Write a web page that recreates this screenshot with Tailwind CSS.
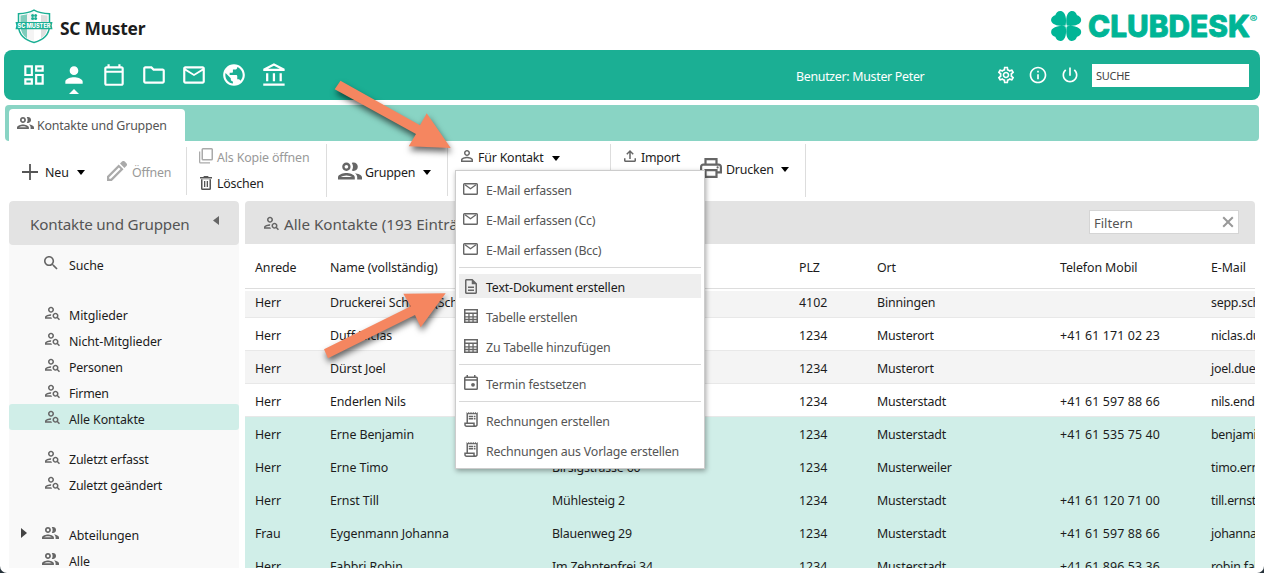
<!DOCTYPE html>
<html lang="de">
<head>
<meta charset="utf-8">
<title>ClubDesk – Kontakte und Gruppen</title>
<script src="https://cdn.jsdelivr.net/npm/@tailwindcss/browser@4"></script>
</head>
<body class="bg-[#26323a]">
<svg class="hidden">
  <symbol id="dash" viewBox="0 0 24 24"><path d="M19 5v2h-4V5h4M9 5v6H5V5h4m10 8v6h-4v-6h4M9 17v2H5v-2h4M21 3h-8v6h8V3zM11 3H3v10h8V3zm10 8h-8v10h8V11zm-10 4H3v6h8v-6z"/></symbol>
  <symbol id="person" viewBox="0 0 24 24"><path d="M12 12c2.21 0 4-1.79 4-4s-1.79-4-4-4-4 1.79-4 4 1.79 4 4 4zm0 2c-2.67 0-8 1.34-8 4v2h16v-2c0-2.66-5.33-4-8-4z"/></symbol>
  <symbol id="cal" viewBox="0 0 24 24"><path d="M19 4h-1V2h-2v2H8V2H6v2H5c-1.1 0-2 .9-2 2v14c0 1.1.9 2 2 2h14c1.1 0 2-.9 2-2V6c0-1.1-.9-2-2-2zm0 16H5V10h14v10zm0-12H5V6h14v2z"/></symbol>
  <symbol id="folder" viewBox="0 0 24 24"><path d="M9.17 6l2 2H20v10H4V6h5.17M10 4H4c-1.1 0-1.99.9-1.99 2L2 18c0 1.1.9 2 2 2h16c1.1 0 2-.9 2-2V8c0-1.1-.9-2-2-2h-8l-2-2z"/></symbol>
  <symbol id="mail" viewBox="0 0 24 24"><path d="M22 6c0-1.1-.9-2-2-2H4c-1.1 0-2 .9-2 2v12c0 1.1.9 2 2 2h16c1.1 0 2-.9 2-2V6zm-2 0l-8 5-8-5h16zm0 12H4V8l8 5 8-5v10z"/></symbol>
  <symbol id="globe" viewBox="0 0 24 24"><path d="M12 2C6.48 2 2 6.48 2 12s4.48 10 10 10 10-4.48 10-10S17.52 2 12 2zm-1 17.93c-3.95-.49-7-3.85-7-7.93 0-.62.08-1.21.21-1.79L9 15v1c0 1.1.9 2 2 2v1.93zm6.9-2.54c-.26-.81-1-1.39-1.9-1.39h-1v-3c0-.55-.45-1-1-1H8v-2h2c.55 0 1-.45 1-1V7h2c1.1 0 2-.9 2-2v-.41c2.93 1.19 5 4.06 5 7.41 0 2.08-.8 3.97-2.1 5.39z"/></symbol>
  <symbol id="bank" viewBox="0 0 24 24"><path d="M6.5 10h-2v7h2v-7zm6 0h-2v7h2v-7zm8.5 9H2v2h19v-2zm-2.5-9h-2v7h2v-7zm-7-6.74L16.71 6H6.29l5.21-2.74m0-2.26L2 6v2h19V6l-9.5-5z"/></symbol>
  <symbol id="gear" viewBox="0 0 24 24"><path d="M19.43 12.98c.04-.32.07-.64.07-.98 0-.34-.03-.66-.07-.98l2.11-1.65c.19-.15.24-.42.12-.64l-2-3.46c-.09-.16-.26-.25-.44-.25-.06 0-.12.01-.17.03l-2.49 1c-.52-.4-1.08-.73-1.69-.98l-.38-2.65C14.46 2.18 14.25 2 14 2h-4c-.25 0-.46.18-.49.42l-.38 2.65c-.61.25-1.17.59-1.69.98l-2.49-1c-.06-.02-.12-.03-.18-.03-.17 0-.34.09-.43.25l-2 3.46c-.13.22-.07.49.12.64l2.11 1.65c-.04.32-.07.65-.07.98 0 .33.03.66.07.98l-2.11 1.65c-.19.15-.24.42-.12.64l2 3.46c.09.16.26.25.44.25.06 0 .12-.01.17-.03l2.49-1c.52.4 1.08.73 1.69.98l.38 2.65c.03.24.24.42.49.42h4c.25 0 .46-.18.49-.42l.38-2.65c.61-.25 1.17-.59 1.69-.98l2.49 1c.06.02.12.03.18.03.17 0 .34-.09.43-.25l2-3.46c.12-.22.07-.49-.12-.64l-2.11-1.65zm-1.98-1.71c.04.31.05.52.05.73 0 .21-.02.43-.05.73l-.14 1.13.89.7 1.08.84-.7 1.21-1.27-.51-1.04-.42-.9.68c-.43.32-.84.56-1.25.73l-1.06.43-.16 1.13-.2 1.35h-1.4l-.19-1.35-.16-1.13-1.06-.43c-.43-.18-.83-.41-1.23-.71l-.91-.7-1.06.43-1.27.51-.7-1.21 1.08-.84.89-.7-.14-1.13c-.03-.31-.05-.54-.05-.74s.02-.43.05-.73l.14-1.13-.89-.7-1.08-.84.7-1.21 1.27.51 1.04.42.9-.68c.43-.32.84-.56 1.25-.73l1.06-.43.16-1.13.2-1.35h1.39l.19 1.35.16 1.13 1.06.43c.43.18.83.41 1.23.71l.91.7 1.06-.43 1.27-.51.7 1.21-1.07.85-.89.7.14 1.13zM12 8c-2.21 0-4 1.79-4 4s1.79 4 4 4 4-1.79 4-4-1.79-4-4-4zm0 6c-1.1 0-2-.9-2-2s.9-2 2-2 2 .9 2 2-.9 2-2 2z"/></symbol>
  <symbol id="info" viewBox="0 0 24 24"><path d="M11 7h2v2h-2zm0 4h2v6h-2zm1-9C6.48 2 2 6.48 2 12s4.48 10 10 10 10-4.48 10-10S17.52 2 12 2zm0 18c-4.41 0-8-3.59-8-8s3.59-8 8-8 8 3.59 8 8-3.59 8-8 8z"/></symbol>
  <symbol id="power" viewBox="0 0 24 24"><path d="M13 3h-2v10h2V3zm4.83 2.17l-1.42 1.42C17.99 7.86 19 9.81 19 12c0 3.87-3.13 7-7 7s-7-3.13-7-7c0-2.19 1.01-4.14 2.58-5.42L6.17 5.17C4.23 6.82 3 9.26 3 12c0 4.97 4.03 9 9 9s9-4.03 9-9c0-2.74-1.23-5.18-3.17-6.83z"/></symbol>
  <symbol id="group" viewBox="2 5 20 14"><path d="M9 13.75c-2.34 0-7 1.17-7 3.5V19h14v-1.75c0-2.33-4.66-3.5-7-3.5zM4.34 17c.84-.58 2.87-1.25 4.66-1.25s3.82.67 4.66 1.25H4.34zM9 12c1.93 0 3.5-1.57 3.5-3.5S10.93 5 9 5 5.500 6.570 5.500 8.500 7.070 12 9 12zm0-5c.83 0 1.500.67 1.500 1.500S9.830 10 9 10s-1.500-.67-1.500-1.500S8.170 7 9 7zm7.040 6.810c1.160.84 1.960 1.960 1.960 3.440V19h4v-1.750c0-2.020-3.500-3.170-5.960-3.440zM15 12c1.930 0 3.500-1.570 3.500-3.500S16.930 5 15 5c-.54 0-1.040.13-1.500.35.63.89 1 1.980 1 3.150s-.37 2.260-1 3.150c.46.22.96.35 1.500.35z"/></symbol>
  <symbol id="psearch" viewBox="2 3 20 20"><path d="M10 12c2.21 0 4-1.79 4-4s-1.79-4-4-4-4 1.79-4 4 1.79 4 4 4zm0-6c1.1 0 2 .9 2 2s-.9 2-2 2-2-.9-2-2 .9-2 2-2zM4 18c.22-.72 3.31-2 6-2 0-.7.13-1.37.35-1.99C7.62 13.91 2 15.27 2 18v2h9.54c-.52-.58-.93-1.25-1.19-2H4zM19.43 18.02C19.79 17.43 20 16.74 20 16c0-2.21-1.79-4-4-4s-4 1.79-4 4 1.79 4 4 4c.74 0 1.430-.22 2.020-.57L20.590 22 22 20.590l-2.570-2.570zM16 18c-1.1 0-2-.9-2-2s.9-2 2-2 2 .9 2 2-.9 2-2 2z"/></symbol>
  <symbol id="search" viewBox="3 3 18 18"><path d="M15.5 14h-.79l-.28-.27C15.410 12.590 16 11.110 16 9.500 16 5.910 13.090 3 9.500 3S3 5.910 3 9.500 5.910 16 9.500 16c1.610 0 3.090-.59 4.230-1.570l.27.28v.79l5 4.990L20.490 19l-4.990-5zm-6 0C7.010 14 5 11.990 5 9.500S7.010 5 9.500 5 14 7.010 14 9.500 11.990 14 9.500 14z"/></symbol>
  <symbol id="plus" viewBox="0 0 16 16"><path d="M7.100 0h1.800v7.100H16v1.800H8.900V16H7.100V8.900H0V7.100h7.100z"/></symbol>
  <symbol id="pen" viewBox="0 0 20 20"><path fill-rule="evenodd" d="M0 20v-4.800L11.700 3.500l4.800 4.800L4.800 20zM2.200 17.800h1.600l9.700-9.700-1.600-1.600L2.200 16.200zM13 2.600l2-2a2 2 0 0 1 2.800 0l1.600 1.600a2 2 0 0 1 0 2.800l-2 2z"/></symbol>
  <symbol id="copy" viewBox="0 0 14 16"><path fill-rule="evenodd" d="M4 0h8.500A1.500 1.500 0 0 1 14 1.500v9.500a1.500 1.500 0 0 1-1.500 1.500H4A1.500 1.500 0 0 1 2.500 11V1.500A1.500 1.500 0 0 1 4 0zm0 1.500V11h8.500V1.500zM0 3.500h1.300v10.700h9.700v1.300H1.500A1.500 1.500 0 0 1 0 14z"/></symbol>
  <symbol id="trash" viewBox="0 0 12 14"><path fill-rule="evenodd" d="M4 0h4l.7 1H12v1.500H0V1h3.300zM1 3.300h10v9.200a1.500 1.500 0 0 1-1.500 1.500h-7A1.500 1.500 0 0 1 1 12.500zm1.500.2v9h7v-9zM4 5h1.300v6H4zm2.700 0H8v6H6.700z"/></symbol>
  <symbol id="pout" viewBox="4 4 16 16"><path d="M12 5.900c1.160 0 2.100.94 2.100 2.100s-.94 2.100-2.100 2.100S9.900 9.160 9.900 8s.94-2.100 2.100-2.100m0 9c2.970 0 6.100 1.460 6.100 2.100v1.100H5.900V17c0-.64 3.130-2.100 6.100-2.100M12 4C9.790 4 8 5.790 8 8s1.790 4 4 4 4-1.790 4-4-1.790-4-4-4zm0 9c-2.670 0-8 1.340-8 4v3h16v-3c0-2.660-5.330-4-8-4z"/></symbol>
  <symbol id="upload" viewBox="4 4 16 16"><path d="M18 15v3H6v-3H4v3c0 1.100.9 2 2 2h12c1.100 0 2-.9 2-2v-3h-2zM7 9l1.410 1.410L11 7.830V16h2V7.830l2.590 2.580L17 9l-5-5-5 5z"/></symbol>
  <symbol id="print" viewBox="2 3 20 18"><path d="M19 8h-1V3H6v5H5c-1.660 0-3 1.340-3 3v6h4v4h12v-4h4v-6c0-1.660-1.340-3-3-3zM8 5h8v3H8V5zm8 12v2H8v-4h8v2zm2-2v-2H6v2H4v-4c0-.55.45-1 1-1h14c.55 0 1 .45 1 1v4h-2z"/><circle cx="18" cy="11.500" r="1"/></symbol>
  <symbol id="menvelope" viewBox="0 0 15 12"><rect x=".7" y=".7" width="13.600" height="10.600" rx=".8" fill="none" stroke="#666" stroke-width="1.400"/><path d="M2 1.800l5.500 4L13 1.800" fill="none" stroke="#666" stroke-width="1.300"/></symbol>
  <symbol id="doc" viewBox="4 2 16 20"><path d="M8 16h8v2H8zm0-4h8v2H8zm6-10H6c-1.100 0-2 .9-2 2v16c0 1.100.89 2 1.990 2H18c1.100 0 2-.9 2-2V8l-6-6zm4 18H6V4h7v5h5v11z"/></symbol>
  <symbol id="table" viewBox="0 0 14 14"><path fill-rule="evenodd" d="M0 0h14v14H0zM1.500 1.500v2h11v-2zM1.500 5v2.200h2.800V5zm4.100 0v2.200h2.800V5zm4.100 0v2.200h2.800V5zM1.500 8.600v1.200h2.800V8.600zm4.100 0v1.200h2.800V8.600zm4.100 0v1.200h2.800V8.600zM1.500 11.200v1.400h2.800v-1.400zm4.100 0v1.400h2.800v-1.400zm4.100 0v1.400h2.800v-1.400z"/></symbol>
  <symbol id="event" viewBox="0 0 14 15"><path fill-rule="evenodd" d="M2.500 0H4v1.500h6V0h1.500v1.500h1A1.500 1.500 0 0 1 14 3v10.500a1.500 1.500 0 0 1-1.500 1.500h-11A1.500 1.500 0 0 1 0 13.500V3a1.500 1.500 0 0 1 1.500-1.500h1zM1.500 3v1.200h11V3zm0 2.700v7.800h11V5.700z"/><circle cx="9" cy="9.800" r="1.900"/></symbol>
  <symbol id="receipt" viewBox="3 2 18 20"><path d="M19.500 3.500L18 2l-1.500 1.500L15 2l-1.500 1.500L12 2l-1.500 1.500L9 2 7.500 3.500 6 2v14H3v3c0 1.660 1.340 3 3 3h12c1.660 0 3-1.340 3-3V2l-1.500 1.500zM15 20H6c-.55 0-1-.45-1-1v-1h10v2zm4-1c0 .55-.45 1-1 1s-1-.45-1-1v-3H8V5h11v14zM9 7h6v2H9zM16 7h2v2h-2zM9 10h6v2H9zM16 10h2v2h-2z"/></symbol>
</svg>

<div class="relative flex h-[573px] w-[1264px] flex-col overflow-hidden rounded-b-[7px] bg-white font-['Noto_Sans',sans-serif] text-[12.4px] leading-[18px] tracking-[-0.09px] text-[#1c1c1c]">

  <!-- Brand row -->
  <header class="flex h-[50px] shrink-0 justify-between">
    <div class="flex pl-[15px]">
      <svg class="mt-[9px] h-[35px] w-[38px]" viewBox="0 0 38 35">
        <path d="M19 1.200Q25 4.500 34.500 4.800V17Q34 29.500 19 33.500Q4 29.500 3.500 17V4.800Q13 4.500 19 1.200Z" fill="#fff" stroke="#1baf94" stroke-width="1.500"/>
        <path d="M19 3Q13 6.200 5.500 6.500V16.500Q6 26 12 29.300V6z" fill="#7fcdbc"/>
        <path d="M12 5.500L19 3.300V31.800Q15 31 12 29.200z" fill="#f4f4f4"/>
        <path d="M19 3.300Q25 6 32.500 6.500V17Q32 26 26 29.500L19 31.800z" fill="#fff"/>
        <path d="M26 6v23.500Q32 26 32.500 17V6.500z" fill="#dedede"/>
        <g fill="#1baf94"><circle cx="17.600" cy="6.500" r="1.500"/><circle cx="20.600" cy="6.500" r="1.500"/><circle cx="17.600" cy="9.500" r="1.500"/><circle cx="20.600" cy="9.500" r="1.500"/>
        <path d="M0.500 13h37l-.8 3.500.8 3.700H.5l.8-3.700z"/></g>
        <text x="2.500" y="18.900" font-family="Inter, sans-serif" font-weight="800" font-size="6" letter-spacing="0" fill="#fff" textLength="33" lengthAdjust="spacingAndGlyphs">SC MUSTER</text>
      </svg>
      <h1 class="ml-[7px] mt-[15px] text-[17.4px] font-bold leading-[26px] tracking-[-0.25px]">SC Muster</h1>
    </div>
    <svg class="mr-[4px] mt-[9px] h-[36px] w-[210px]" viewBox="0 0 210 36" fill="#00b596">
      <path d="M16.700 16.600C15.300 9.500 17 3.500 20.500 2.200C24 1.200 26.200 3.800 27 6.200C29.500 7 31.800 9 31 12.300C29.700 15.800 23.500 17.700 16.700 16.600Z"/>
      <path d="M16.700 16.600C15.300 9.500 17 3.500 20.500 2.200C24 1.200 26.200 3.800 27 6.200C29.500 7 31.800 9 31 12.300C29.700 15.800 23.500 17.700 16.700 16.600Z" transform="translate(32.300 0) scale(-1 1)"/>
      <path d="M16.700 16.600C15.300 9.500 17 3.500 20.500 2.200C24 1.200 26.200 3.800 27 6.200C29.500 7 31.800 9 31 12.300C29.700 15.800 23.500 17.700 16.700 16.600Z" transform="translate(0 34) scale(1 -1)"/>
      <path d="M16.700 16.600C15.300 9.500 17 3.500 20.500 2.200C24 1.200 26.200 3.800 27 6.200C29.500 7 31.800 9 31 12.300C29.700 15.800 23.500 17.700 16.700 16.600Z" transform="translate(32.300 34) scale(-1 -1)"/>
      <text x="38" y="28.300" font-family="Inter, sans-serif" font-weight="800" font-size="30" letter-spacing="0" stroke="#00b596" stroke-width=".8" stroke-linejoin="round" textLength="162" lengthAdjust="spacingAndGlyphs">CLUBDESK</text>
      <text x="199.500" y="14" font-family="Inter, sans-serif" font-size="10" font-weight="600" letter-spacing="0" textLength="8" lengthAdjust="spacingAndGlyphs">®</text>
    </svg>
  </header>

  <!-- Main navigation -->
  <nav class="mx-[4px] flex h-[50px] shrink-0 items-center rounded-[8px] bg-[#1baf94] pl-[10px] text-white">
    <div class="flex fill-white">
      <div class="flex w-10 justify-center"><svg class="size-[26px]"><use href="#dash"/></svg></div>
      <div class="relative flex w-10 justify-center"><svg class="size-[26px]"><use href="#person"/></svg><svg class="absolute left-[15px] top-[27px] h-[5px] w-[10px]" viewBox="0 0 10 5"><path d="M0 5L5 0L10 5z"/></svg></div>
      <div class="flex w-10 justify-center"><svg class="size-[26px]"><use href="#cal"/></svg></div>
      <div class="flex w-10 justify-center"><svg class="size-[26px]"><use href="#folder"/></svg></div>
      <div class="flex w-10 justify-center"><svg class="size-[26px]"><use href="#mail"/></svg></div>
      <div class="flex w-10 justify-center"><svg class="size-[26px]"><use href="#globe"/></svg></div>
      <div class="flex w-10 justify-center"><svg class="size-[27px]"><use href="#bank"/></svg></div>
    </div>
    <div class="ml-auto mr-[11px] flex items-center fill-white">
      <span class="mt-[3px] w-[200px] tracking-[-0.3px]">Benutzer: Muster Peter</span>
      <svg class="size-5"><use href="#gear"/></svg>
      <svg class="ml-3 size-5"><use href="#info"/></svg>
      <svg class="ml-3 size-5"><use href="#power"/></svg>
      <div class="ml-[12px] flex h-[23px] w-[157px] items-center bg-white pl-1 pt-px text-[11px] tracking-[-0.3px] text-[#444]">SUCHE</div>
    </div>
  </nav>

  <!-- Tab strip -->
  <div class="mx-[5px] mt-[5px] flex h-[36px] shrink-0 rounded-[4px] bg-[#89d4c4] pl-[4px] pt-[4px]">
    <div class="flex w-[176px] rounded-t-[4px] bg-white pl-[8px] text-[#555]">
      <svg class="mt-[8px] h-[12px] w-[17px] fill-[#666]"><use href="#group"/></svg>
      <span class="ml-[3px] mt-[8px] whitespace-nowrap tracking-[-0.18px]">Kontakte und Gruppen</span>
    </div>
  </div>

  <!-- Toolbar -->
  <div class="flex h-[60px] shrink-0 items-start pl-[9px] pt-[3px]">
    <div class="mt-[3px] flex h-[48px] w-[178px] border-r border-[#ddd] pl-[13px]">
      <svg class="mt-[17px] size-[16px] fill-[#555]"><use href="#plus"/></svg>
      <span class="ml-[7px] mt-[17px] w-[32px]">Neu</span>
      <svg class="mt-[23px] h-[5px] w-[8px]" viewBox="0 0 8 5"><path d="M0 0h8L4 5z"/></svg>
      <svg class="ml-[22px] mt-[14px] size-[20px] fill-[#aaa]"><use href="#pen"/></svg>
      <span class="ml-[5px] mt-[17px] tracking-[-0.2px] text-[#999]">Öffnen</span>
    </div>
    <div class="flex h-[53px] w-[140px] flex-col border-r border-[#ddd] pl-[12px]">
      <div class="flex h-[26px] text-[#999]"><svg class="mt-[4px] h-[16px] w-[14px] fill-[#aaa]"><use href="#copy"/></svg><span class="ml-[4px] mt-[5px] whitespace-nowrap tracking-[-0.15px]">Als Kopie öffnen</span></div>
      <div class="flex h-[26px]"><svg class="ml-[1px] mt-[6px] h-[14px] w-[12px] fill-[#555]"><use href="#trash"/></svg><span class="ml-[5px] mt-[5px] tracking-[-0.2px]">Löschen</span></div>
    </div>
    <div class="flex h-[52px] w-[121px] border-r border-[#ddd] pl-[11px]">
      <svg class="mt-[18px] h-[18px] w-[24px] fill-[#666]"><use href="#group"/></svg>
      <span class="ml-[3px] mt-[20px] w-[58px] tracking-[-0.2px]">Gruppen</span>
      <svg class="mt-[26px] h-[5px] w-[8px]" viewBox="0 0 8 5"><path d="M0 0h8L4 5z"/></svg>
    </div>
    <div class="flex h-[53px] w-[163px] border-r border-[#ddd] pl-[13px]">
      <svg class="mt-[6px] size-[12px] fill-[#666]"><use href="#pout"/></svg>
      <span class="ml-[5px] mt-[5px] w-[74px] tracking-[-0.2px]">Für Kontakt</span>
      <svg class="mt-[12px] h-[5px] w-[8px]" viewBox="0 0 8 5"><path d="M0 0h8L4 5z"/></svg>
    </div>
    <div class="flex h-[53px] w-[195px] border-r border-[#ddd] pl-[13px]">
      <svg class="mt-[6px] size-[12px] fill-[#666]"><use href="#upload"/></svg>
      <span class="ml-[5px] mt-[5px] w-[59px] tracking-[-0.25px]">Import</span>
      <svg class="mt-[14px] h-[20px] w-[22px] fill-[#666]"><use href="#print"/></svg>
      <span class="ml-[4px] mt-[17px] w-[55px] tracking-[-0.2px]">Drucken</span>
      <svg class="mt-[23px] h-[5px] w-[8px]" viewBox="0 0 8 5"><path d="M0 0h8L4 5z"/></svg>
    </div>
  </div>

  <!-- Sidebar and table -->
  <main class="flex h-[367px] shrink-0 gap-[6px] pl-[9px]">
    <aside class="w-[230px] overflow-hidden rounded-t-[4px] bg-[#f9f9f9]">
      <div class="flex h-[44px] justify-between rounded-[4px] bg-[#e3e3e3] pl-[21px] pr-[20px] text-[15.2px] text-[#555]">
        <span class="mt-[14px] whitespace-nowrap tracking-[-0.2px]">Kontakte und Gruppen</span>
        <svg class="mt-[15px] h-[9px] w-[6px] fill-[#666]" viewBox="0 0 6 9"><path d="M6 0v9L0 4.500z"/></svg>
      </div>
      <div class="flex flex-col fill-[#666] pt-[5px]">
        <div class="flex h-[26px] pl-[35px]"><svg class="mt-[6px] size-[14px]"><use href="#search"/></svg><span class="ml-[11px] mt-[7px]">Suche</span></div>
        <div class="mt-6 flex h-[26px] pl-[36px]"><svg class="mt-[6px] size-[15px]"><use href="#psearch"/></svg><span class="ml-[9px] mt-[7px]">Mitglieder</span></div>
        <div class="flex h-[26px] pl-[36px]"><svg class="mt-[6px] size-[15px]"><use href="#psearch"/></svg><span class="ml-[9px] mt-[7px]">Nicht-Mitglieder</span></div>
        <div class="flex h-[26px] pl-[36px]"><svg class="mt-[6px] size-[15px]"><use href="#psearch"/></svg><span class="ml-[9px] mt-[7px] tracking-[-0.2px]">Personen</span></div>
        <div class="flex h-[26px] pl-[36px]"><svg class="mt-[6px] size-[15px]"><use href="#psearch"/></svg><span class="ml-[9px] mt-[7px] tracking-[-0.2px]">Firmen</span></div>
        <div class="flex h-[26px] rounded-[3px] bg-[#d0eee8] pl-[36px]"><svg class="mt-[6px] size-[15px]"><use href="#psearch"/></svg><span class="ml-[9px] mt-[7px]">Alle Kontakte</span></div>
        <div class="mt-[14px] flex h-[26px] pl-[36px]"><svg class="mt-[6px] size-[15px]"><use href="#psearch"/></svg><span class="ml-[9px] mt-[7px] tracking-[-0.2px]">Zuletzt erfasst</span></div>
        <div class="flex h-[26px] pl-[36px]"><svg class="mt-[6px] size-[15px]"><use href="#psearch"/></svg><span class="ml-[9px] mt-[7px] tracking-[-0.2px]">Zuletzt geändert</span></div>
        <div class="mt-6 flex h-[26px] pl-[12px]"><svg class="mt-[8px] h-[10px] w-[6px] fill-[#444]" viewBox="0 0 6 10"><path d="M0 0v10L6 5z"/></svg><svg class="ml-[15px] mt-[7px] h-[12px] w-[17px]"><use href="#group"/></svg><span class="ml-[10px] mt-[7px]">Abteilungen</span></div>
        <div class="flex h-[26px] pl-[33px]"><svg class="mt-[7px] h-[12px] w-[17px]"><use href="#group"/></svg><span class="ml-[10px] mt-[7px]">Alle</span></div>
      </div>
    </aside>

    <section class="flex w-[1010px] flex-col overflow-hidden rounded-t-[4px] whitespace-nowrap">
      <div class="flex h-[43px] shrink-0 bg-[#e3e3e3] pl-[19px] pr-4 text-[#555]">
        <svg class="mt-[15px] size-[15px] fill-[#666]"><use href="#psearch"/></svg>
        <span class="ml-[5px] mt-[14px] text-[15.2px] tracking-[-0.03px]">Alle Kontakte (193 Einträge)</span>
        <div class="ml-auto mt-[9px] flex h-[24px] w-[150px] items-center justify-between border border-[#d5d5d5] bg-white pl-1 pr-[4px] text-[13px] tracking-normal"><span class="mt-[2px]">Filtern</span><svg class="size-[12px]" viewBox="0 0 12 12"><path d="M1.200 1.200l9.600 9.600M10.800 1.200L1.200 10.800" stroke="#999" stroke-width="2"/></svg></div>
      </div>
      <div class="grid h-[45px] shrink-0 grid-cols-[75px_222px_247px_78px_183px_151px_44px] border-b border-[#ddd] pl-[10px] pt-[15px]">
        <span>Anrede</span><span>Name (vollständig)</span><span>Strasse</span><span>PLZ</span><span>Ort</span><span>Telefon Mobil</span><span>E-Mail</span>
      </div>
      <div class="mt-[2px] min-h-0 flex-1 overflow-hidden">
        <div id="rows" class="-mt-[6px]"></div>
      </div>
    </section>
  </main>

  <!-- Dropdown menu "Für Kontakt" -->
  <div class="absolute left-[455px] top-[170px] flex h-[299px] w-[250px] flex-col gap-[6px] border border-[#ccc] bg-white fill-[#666] px-[3px] pt-[6px] tracking-[-0.18px] text-[#555] shadow-[1px_2px_5px_rgba(0,0,0,0.35)]">
    <div class="flex h-6 shrink-0"><svg class="ml-[4px] mt-[6px] h-[12px] w-[15px]"><use href="#menvelope"/></svg><span class="ml-[8px] mt-[5px]">E-Mail erfassen</span></div>
    <div class="flex h-6 shrink-0"><svg class="ml-[4px] mt-[6px] h-[12px] w-[15px]"><use href="#menvelope"/></svg><span class="ml-[8px] mt-[5px]">E-Mail erfassen (Cc)</span></div>
    <div class="flex h-6 shrink-0"><svg class="ml-[4px] mt-[6px] h-[12px] w-[15px]"><use href="#menvelope"/></svg><span class="ml-[8px] mt-[5px]">E-Mail erfassen (Bcc)</span></div>
    <div class="h-px shrink-0 bg-[#d8d8d8]"></div>
    <div class="flex h-6 shrink-0 bg-[#eee]"><svg class="ml-[6px] mt-[5px] h-[15px] w-[12px]"><use href="#doc"/></svg><span class="ml-[9px] mt-[5px] text-[#1c1c1c]">Text-Dokument erstellen</span></div>
    <div class="flex h-6 shrink-0"><svg class="ml-[5px] mt-[5px] size-[14px]"><use href="#table"/></svg><span class="ml-[8px] mt-[5px]">Tabelle erstellen</span></div>
    <div class="flex h-6 shrink-0"><svg class="ml-[5px] mt-[5px] size-[14px]"><use href="#table"/></svg><span class="ml-[8px] mt-[5px]">Zu Tabelle hinzufügen</span></div>
    <div class="h-px shrink-0 bg-[#d8d8d8]"></div>
    <div class="flex h-6 shrink-0"><svg class="ml-[5px] mt-[4px] h-[15px] w-[14px]"><use href="#event"/></svg><span class="ml-[8px] mt-[5px]">Termin festsetzen</span></div>
    <div class="h-px shrink-0 bg-[#d8d8d8]"></div>
    <div class="flex h-6 shrink-0"><svg class="ml-[5px] mt-[4px] h-[15px] w-[14px]"><use href="#receipt"/></svg><span class="ml-[8px] mt-[5px]">Rechnungen erstellen</span></div>
    <div class="flex h-6 shrink-0"><svg class="ml-[5px] mt-[4px] h-[15px] w-[14px]"><use href="#receipt"/></svg><span class="ml-[8px] mt-[5px] whitespace-nowrap">Rechnungen aus Vorlage erstellen</span></div>
  </div>

  <!-- Annotation arrows -->
  <svg class="pointer-events-none absolute left-0 top-0 h-[573px] w-[1264px] fill-[#f58660] drop-shadow-[1px_4px_3px_rgba(0,0,0,0.6)]" viewBox="0 0 1264 573">
    <path d="M340.500 80.700L420 125.300L426.700 113.300L450.700 148L408.700 146.300L416 134L334.700 89.300z"/>
    <path d="M324 349.300L410.700 306.300L403.300 293.700L445.700 293.300L420.700 327.300L415 315L328 358.300z"/>
  </svg>
</div>

<script>
const rows = [
  ["Herr", "Druckerei Schmid (Schmid Sepp)", "", "4102", "Binningen", "", "sepp.schmid", "odd"],
  ["Herr", "Duff Niclas", "", "1234", "Musterort", "+41 61 171 02 23", "niclas.duff", "even"],
  ["Herr", "Dürst Joel", "", "1234", "Musterort", "", "joel.duerst", "odd"],
  ["Herr", "Enderlen Nils", "", "1234", "Musterstadt", "+41 61 597 88 66", "nils.enderlen", "even"],
  ["Herr", "Erne Benjamin", "", "1234", "Musterstadt", "+41 61 535 75 40", "benjamin.erne", "sel"],
  ["Herr", "Erne Timo", "Birsigstrasse 60", "1234", "Musterweiler", "", "timo.erne", "sel"],
  ["Herr", "Ernst Till", "Mühlesteig 2", "1234", "Musterstadt", "+41 61 120 71 00", "till.ernst", "sel"],
  ["Frau", "Eygenmann Johanna", "Blauenweg 29", "1234", "Musterstadt", "+41 61 597 88 66", "johanna.eygenmann", "sel"],
  ["Herr", "Fabbri Robin", "Im Zehntenfrei 34", "1234", "Musterstadt", "+41 61 896 53 36", "robin.fabbri", "sel"]
];
const tone = {
  odd: "bg-[#f4f4f4] border-[#e8e8e8]",
  even: "bg-white border-[#e8e8e8]",
  sel: "bg-[#d0eee8] border-[#d0eee8]"
};
const track = ["", "", "tracking-[-0.2px]", "tracking-normal", "tracking-[-0.16px]", "tracking-[0.13px]", "tracking-[-0.25px]"];
document.getElementById("rows").innerHTML = rows.map(r =>
  `<div class="grid h-[33px] grid-cols-[75px_222px_247px_78px_183px_151px_44px] overflow-hidden border-b pl-[10px] pt-[9px] ${tone[r[7]]}">` +
  r.slice(0, 7).map((c, i) => `<span class="whitespace-nowrap ${track[i]}">${c}</span>`).join("") + `</div>`).join("");
</script>
</body>
</html>
